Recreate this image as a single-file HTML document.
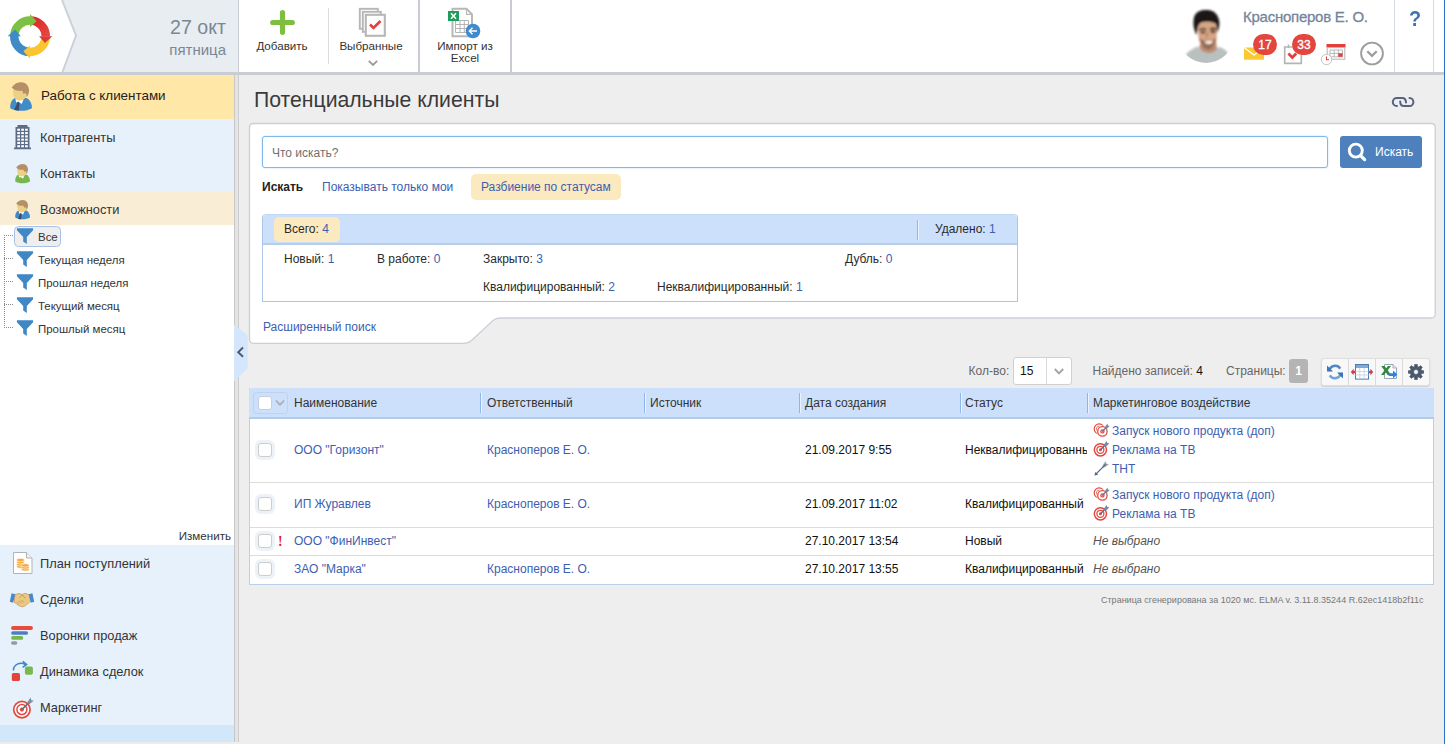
<!DOCTYPE html>
<html lang="ru">
<head>
<meta charset="utf-8">
<title>Потенциальные клиенты</title>
<style>
html,body{margin:0;padding:0;}
body{width:1445px;height:744px;overflow:hidden;position:relative;background:#eeeeee;font-family:"Liberation Sans",Arial,sans-serif;font-size:12px;color:#2a2a2a;}
.abs{position:absolute;}
a{color:#3b60b0;text-decoration:none;}
/* ---------- header ---------- */
#header{position:absolute;left:0;top:0;width:1445px;height:72px;background:#fff;border-bottom:3px solid #c9cdd3;}
#datebox{position:absolute;left:0;top:0;width:238px;height:72px;background:#e8edf1;}
#datebox .d1{position:absolute;right:12px;top:16px;font-size:19.6px;color:#7b8794;white-space:nowrap;}
#datebox .d2{position:absolute;right:12px;top:41px;font-size:15px;color:#7b8794;white-space:nowrap;}
.vsep2{position:absolute;top:0;width:2px;height:72px;background:#c9cdd3;}
.vsep1{position:absolute;width:1px;background:#d9dde2;}
.tbtn{position:absolute;top:0;height:72px;text-align:center;font-size:11.6px;color:#333;line-height:12px;white-space:nowrap;}
#uname{position:absolute;left:1243px;top:8px;line-height:18px;font-size:15px;letter-spacing:-0.25px;-webkit-text-stroke:0.3px #74859c;color:#74859c;white-space:nowrap;}
.badge{position:absolute;height:21px;width:24px;border-radius:11px;background:#e2463f;color:#fff;font-size:12px;line-height:23px;text-align:center;-webkit-text-stroke:0.3px #fff;}
/* ---------- sidebar ---------- */
#side{position:absolute;left:0;top:75px;width:234px;height:669px;background:#fff;}
.nav{position:absolute;left:0;width:234px;height:36px;background:#e7f1fc;}
.nav span{position:absolute;left:40px;top:11px;font-size:12.8px;color:#333;white-space:nowrap;line-height:16px;}
.tree{position:absolute;left:38px;font-size:11.45px;color:#333;white-space:nowrap;line-height:14px;}
#splitter{position:absolute;left:234px;top:75px;width:5px;height:667px;background:linear-gradient(90deg,#c6c6c6 0,#c9c9c9 1px,#e3e3e3 1.4px,#e5e5e5 3.6px,#cbcbcb 4px,#cdcdcd 5px);}
/* ---------- main ---------- */
#title{position:absolute;left:254px;top:86px;font-size:21.2px;color:#3a3a3a;white-space:nowrap;line-height:28px;}
.t12{position:absolute;font-size:12px;line-height:14px;white-space:nowrap;}
.pill{position:absolute;background:#fbe9c0;border-radius:5px;}
#stat{position:absolute;left:262px;top:214px;width:754px;height:86px;border:1px solid #abc6e7;border-top-color:#c2d7f3;background:#fff;border-radius:4px 4px 0 0;overflow:hidden;}
#stat .hd{position:absolute;left:0;top:0;width:754px;height:28px;background:#cce0fc;border-bottom:2px solid #b7cde8;}
/* table */
#grid{position:absolute;left:249px;top:388px;width:1183px;height:195.5px;background:#fff;border:1px solid #b9d0ea;border-top:none;}
#grid .hd{position:absolute;left:-1px;top:0;width:1185px;height:28.6px;background:#cce0fc;border-bottom:2px solid #b3cbea;border-radius:3px 3px 0 0;}
.hsep{position:absolute;top:5px;width:1px;height:20px;background:#8fb6ea;box-shadow:1px 0 0 #eaf3ff;}
.rline{position:absolute;left:0;width:1183px;height:1px;background:#dcdcdc;}
.cb{position:absolute;left:8px;width:14px;height:14px;border:1px solid #cdcdcd;border-radius:3px;background:#fff;box-shadow:0 0 0 3px #edf2f9;box-sizing:border-box;}
.cell{position:absolute;font-size:12px;line-height:14px;white-space:nowrap;color:#111;}
</style>
</head>
<body>
<!-- HEADER -->
<div id="header">
  <div id="datebox">
    <div class="d1">27 окт</div>
    <div class="d2">пятница</div>
  </div>
  <svg class="abs" style="left:0;top:0" width="90" height="72" viewBox="0 0 90 72">
    <path d="M0 0H62L76 35.5L62.5 72H0Z" fill="#fff"/>
    <path d="M62 0L76 35.5L62.5 72" fill="none" stroke="#cdd1d7" stroke-width="2"/>
    <defs><linearGradient id="lgr" x1="0" y1="0" x2="1" y2="1"><stop offset="0" stop-color="#d9262b"/><stop offset="1" stop-color="#e4473f"/></linearGradient></defs>
    <path d="M14.27 35.43A15.75 15.75 0 0 1 30.27 20.50" stroke="#7dc142" stroke-width="8.5" fill="none"/>
    <path d="M30.82 20.52A15.75 15.75 0 0 1 45.75 36.52" stroke="url(#lgr)" stroke-width="8.5" fill="none"/>
    <path d="M45.73 37.07A15.75 15.75 0 0 1 29.73 52.00" stroke="#fbc52f" stroke-width="8.5" fill="none"/>
    <path d="M29.18 51.98A15.75 15.75 0 0 1 14.25 35.98" stroke="#3f8bc8" stroke-width="8.5" fill="none"/>
    <path d="M30.00 27.10L30.00 13.90L36.65 21.31Z" fill="#7dc142"/>
    <path d="M39.15 36.25L52.35 36.25L44.94 42.90Z" fill="#dd3a36"/>
    <path d="M30.00 45.40L30.00 58.60L23.35 51.19Z" fill="#fbc52f"/>
    <path d="M20.85 36.25L7.65 36.25L15.06 29.60Z" fill="#3f8bc8"/>
  </svg>
  <div class="vsep2" style="left:238px;width:1px"></div>
  <!-- toolbar buttons -->
  <svg class="abs" style="left:269px;top:9px" width="27" height="27" viewBox="0 0 27 27"><path d="M13.5 3.7V23.3M3.7 13.5H23.3" stroke="#7fbf3f" stroke-width="5.2" stroke-linecap="round" fill="none"/></svg>
  <div class="tbtn" style="left:241px;width:82px;"><span class="abs" style="left:0;width:82px;top:40px">Добавить</span></div>
  <div class="vsep1" style="left:328px;top:8px;height:56px"></div>
  <svg class="abs" style="left:358px;top:7px" width="30" height="31" viewBox="0 0 30 31">
    <rect x="1.8" y="1.8" width="18" height="20" fill="#fff" stroke="#b7b7b7" stroke-width="1.9"/>
    <rect x="4.8" y="4.8" width="18" height="20" fill="#fff" stroke="#b7b7b7" stroke-width="1.9"/>
    <rect x="7.8" y="7.8" width="19" height="21" fill="#fff" stroke="#b7b7b7" stroke-width="2.1"/>
    <path d="M12 17.5L15.5 21L22.5 14" fill="none" stroke="#e2403a" stroke-width="2.6"/>
  </svg>
  <div class="tbtn" style="left:330px;width:82px;"><span class="abs" style="left:0;width:82px;top:40px">Выбранные</span></div>
  <svg class="abs" style="left:367px;top:59px" width="12" height="9" viewBox="0 0 12 9"><path d="M1.8 1.8L6 6L10.2 1.8" fill="none" stroke="#9a9a9a" stroke-width="1.8"/></svg>
  <div class="vsep2" style="left:418px"></div>
  <svg class="abs" style="left:446px;top:6px" width="36" height="34" viewBox="0 0 36 34">
    <path d="M6.5 2.8H20.5L26 8.3V30.2H6.5Z" fill="#fff" stroke="#b7b7b7" stroke-width="2"/>
    <path d="M20.5 2.8V8.3H26" fill="none" stroke="#b9b9b9" stroke-width="1.2"/>
    <path d="M9.5 14.5H22.5V26.5H9.5ZM9.5 18.5H22.5M9.5 22.5H22.5M14 14.5V26.5M18.3 14.5V26.5" fill="none" stroke="#b4b4b4" stroke-width="1"/>
    <rect x="2" y="5" width="11" height="10" fill="#1e9e5a"/>
    <path d="M5 7.3L10 12.7M10 7.3L5 12.7" stroke="#fff" stroke-width="1.6" fill="none"/>
    <circle cx="27" cy="25" r="7.3" fill="#3f8bd0"/>
    <path d="M31 25H23.5M26.5 21.8L23.3 25L26.5 28.2" stroke="#fff" stroke-width="1.4" fill="none"/>
  </svg>
  <div class="tbtn" style="left:422px;width:86px;"><span class="abs" style="left:0;width:86px;top:40px">Импорт из</span><span class="abs" style="left:0;width:86px;top:52px">Excel</span></div>
  <div class="vsep2" style="left:510px"></div>
  <!-- user block -->
  <svg class="abs" style="left:1176px;top:4px" width="64" height="64" viewBox="0 0 64 64">
    <defs><clipPath id="avc"><circle cx="30" cy="31" r="28"/></clipPath>
    <filter id="avb" x="-10%" y="-10%" width="120%" height="120%"><feGaussianBlur stdDeviation="0.85"/></filter></defs>
    <g clip-path="url(#avc)"><g filter="url(#avb)">
      <path d="M5 64C6 52 12 46.5 21.5 42.5C26 49.5 37 49.5 42.5 43C49 44.5 54 47 56 64Z" fill="#b9c1c0"/>
      <path d="M25 38L40 37L41 45C37 50.5 27 50.5 23 43.5Z" fill="#bd8c6f"/>
      <path d="M21.8 21C21.5 27 22 34 25 40C28 44.5 31 46 33 46C36 45.5 39 42 40.3 36C41 31 41 25 40.3 20.5C36 16 27 16 21.8 21Z" fill="#d6a585"/>
      <path d="M22.8 33C24 39.5 28 45.8 32.6 45.8C36.5 45.5 39.6 40 40.4 33C38 37 35.5 36.2 32 36.4C28 36.4 25 37 22.8 33Z" fill="#8c624e" opacity="0.85"/>
      <path d="M28.2 37.6C30.5 36.9 35 36.7 37 37.3C36 40.6 30 41 28.2 37.6Z" fill="#fbf6f2"/>
      <path d="M23.5 26.2C25.5 24.6 28.5 24.6 30 25.8M34 25.4C36 24.2 38.6 24.2 40 25.4" fill="none" stroke="#2e1c16" stroke-width="1.7"/>
      <path d="M24.8 28.4H29.2M34.8 27.8H39.2" fill="none" stroke="#241611" stroke-width="1.9"/>
      <path d="M31.5 28.5C31.2 31 30.6 32.6 30.4 33.6" fill="none" stroke="#a87358" stroke-width="1.2"/>
      <path d="M20.6 31C17.5 25 16.4 18 18.6 11.5C21 7 26.5 5.6 30 6C35 5.6 40.5 8 42.2 13.5C44.2 18 43.6 24 41 29C41 24.5 40.6 21.5 39.4 19.6C35.5 17 29 17.4 25.2 18.4C23 20 21.8 22 21.8 24.5C21.2 26.5 21 29 20.6 31Z" fill="#1d1917"/>
    </g></g>
  </svg>
  <div id="uname">Красноперов Е. О.</div>
  <svg class="abs" style="left:1243px;top:46px" width="22" height="15" viewBox="0 0 22 15"><path d="M1 1.5H21V13.7H1Z" fill="#fbc831"/><path d="M1 1.5L11 9L21 1.5" fill="none" stroke="#fff" stroke-width="1.3"/></svg>
  <div class="badge" style="left:1253px;top:34px">17</div>
  <svg class="abs" style="left:1282px;top:43px" width="22" height="22" viewBox="0 0 22 22"><path d="M2.7 4H19.3V20.3H2.7Z" fill="#fff" stroke="#b5b5b5" stroke-width="1.7"/><path d="M6.5 1.5V5M15.5 1.5V5" stroke="#b5b5b5" stroke-width="1.6"/><path d="M6.4 10.6L10.3 14.5L14.2 10.6" fill="none" stroke="#e2403a" stroke-width="2.8"/></svg>
  <div class="badge" style="left:1292px;top:34px">33</div>
  <svg class="abs" style="left:1320px;top:43px" width="27" height="23" viewBox="0 0 27 23">
    <rect x="6.5" y="1" width="19" height="3.6" fill="#e2403a"/>
    <rect x="7.2" y="4.6" width="17.6" height="11.6" fill="#fff" stroke="#b9b9b9" stroke-width="1.1"/>
    <path d="M10 7H22.5V13.8H10ZM10 10.4H22.5M14.2 7V13.8M18.3 7V13.8" fill="none" stroke="#b0b0b0" stroke-width="0.9"/>
    <rect x="18.3" y="10.4" width="4.2" height="3.4" fill="#e2403a"/>
    <circle cx="6.5" cy="16.5" r="5.2" fill="#fff" stroke="#c4c4c4" stroke-width="1"/>
    <path d="M6.5 13.5V16.8H9" fill="none" stroke="#e2403a" stroke-width="1.1"/>
  </svg>
  <svg class="abs" style="left:1359px;top:41px" width="26" height="26" viewBox="0 0 26 26"><circle cx="13" cy="12.5" r="10.9" fill="#fff" stroke="#9d9d9d" stroke-width="1.9"/><path d="M8.3 10.2L13 14.9L17.7 10.2" fill="none" stroke="#9d9d9d" stroke-width="2.3"/></svg>
  <div class="vsep1" style="left:1394px;top:0;height:72px;background:#d5dae3"></div>
  <div class="abs" style="left:1408.5px;top:6px;font-size:22.5px;font-weight:bold;color:#3f73b7;line-height:26px;transform:scaleX(0.88);transform-origin:0 0">?</div>
  <div class="vsep1" style="left:1433px;top:0;height:72px;background:#d5dae3"></div>
</div>
<!-- SIDEBAR -->
<div id="side">
  <svg width="0" height="0" style="position:absolute">
    <defs>
      <symbol id="man" viewBox="0 0 36 36">
        <path d="M6.2 30.2C5.8 25 8 21.3 10.8 19.9L22.6 19.9C25.6 21.5 28.2 25.5 27.9 30.2C23 33.6 11 33.6 6.2 30.2Z" fill="currentColor"/>
        <path d="M11.3 20.4L12.2 24.6L14.3 23.6L17.6 26L19.6 21.4Z" fill="#fff"/>
        <path d="M13.6 24L15.6 25L14.8 32.6C13.4 32.6 11.6 32.3 10.3 31.8Z" fill="var(--tie,#3b4d68)"/>
        <path d="M9.3 11.5C8.3 16 10.5 22.7 15.6 22.7C19.4 22.7 21.4 20.3 22.3 18.6C23.2 17.8 23 15.8 21.8 15.6L19 11Z" fill="#ecd083"/>
        <path d="M7.7 9.4C10 6 13.5 4.2 17.3 4.3C22.3 4.4 25.3 8.5 25 13C24.8 15.8 23.7 18.2 22.6 19.6C22.9 17.6 22.6 16.2 21.7 15.4C20.8 15 20.1 15.4 19.6 16C19 15 18.6 14 18.4 12.8C15 13.2 10.5 12.8 7.7 9.4Z" fill="#b58f68"/>
      </symbol>
      <symbol id="tgt" viewBox="0 0 17 17">
        <circle cx="7.4" cy="9.8" r="6.1" fill="#fff" stroke="#e5483f" stroke-width="1.5"/>
        <circle cx="7.4" cy="9.8" r="3.5" fill="#fff" stroke="#e5483f" stroke-width="1.3"/>
        <circle cx="7.4" cy="9.8" r="1.5" fill="#e5483f"/>
        <path d="M7.2 10L13.2 4" stroke="#55708f" stroke-width="1.3"/>
        <path d="M10.8 5L13.6 1L14.4 2.9L16.4 3.6L12.6 6.8Z" fill="#7489a2"/>
      </symbol>
      <symbol id="tgt2" viewBox="0 0 17 17">
        <circle cx="6.2" cy="6.9" r="5" fill="none" stroke="#e5483f" stroke-width="1.2"/>
        <circle cx="6.2" cy="6.9" r="2.8" fill="none" stroke="#ec6f68" stroke-width="1"/>
        <circle cx="9.4" cy="9.4" r="5.9" fill="#fff"/>
        <circle cx="9.4" cy="9.4" r="4.7" fill="#fff" stroke="#e5483f" stroke-width="1.3"/>
        <circle cx="9.4" cy="9.4" r="2.2" fill="#e5483f"/>
        <circle cx="9.4" cy="9.4" r="0.9" fill="#fff"/>
        <path d="M9.2 9.6L14 4.8" stroke="#55708f" stroke-width="1.3"/>
        <path d="M11.8 5.4L14.4 1.6L15 3.5L16.6 4.2L13.2 7Z" fill="#7489a2"/>
      </symbol>
      <symbol id="arw" viewBox="0 0 17 17">
        <path d="M2.6 14.4L12.4 4.6" stroke="#50688a" stroke-width="1.3"/>
        <path d="M1.4 15.6L2.3 11.9L5.2 14.8Z" fill="#50688a"/>
        <path d="M9.4 5.6L12.4 1L13.4 3.6L16 4.6L11.4 7.6Z" fill="#a9aeb5"/>
        <path d="M9.6 7.4L13 4" stroke="#50688a" stroke-width="1.3"/>
      </symbol>
      <symbol id="funnel" viewBox="0 0 20 20">
        <path d="M1 1.5H19V3.5L12 11V19L8 16V11L1 3.5Z" fill="#3f87c5"/>
      </symbol>
    </defs>
  </svg>
  <!-- active section -->
  <div class="nav" style="top:0;height:44px;background:#ffe8a7">
    <svg class="abs" style="left:4px;top:3px;color:#418bc8" width="36" height="36"><use href="#man"/></svg>
    <span style="left:41px;top:13px;font-size:13.4px;color:#222">Работа с клиентами</span>
  </div>
  <div class="nav" style="top:44px">
    <svg class="abs" style="left:13px;top:5px" width="19" height="26" viewBox="0 0 19 26">
      <path d="M4.5 1H14.5V3H16.5V23.5H18V25.2H1V23.5H2.5V3H4.5Z" fill="#5c6c86"/>
      <g fill="#fff"><rect x="4.3" y="4.7" width="2.7" height="2.1"/><rect x="8.2" y="4.7" width="2.7" height="2.1"/><rect x="12.1" y="4.7" width="2.7" height="2.1"/>
      <rect x="4.3" y="8" width="2.7" height="2.1"/><rect x="8.2" y="8" width="2.7" height="2.1"/><rect x="12.1" y="8" width="2.7" height="2.1"/>
      <rect x="4.3" y="11.3" width="2.7" height="2.1"/><rect x="8.2" y="11.3" width="2.7" height="2.1"/><rect x="12.1" y="11.3" width="2.7" height="2.1"/>
      <rect x="4.3" y="14.6" width="2.7" height="2.1"/><rect x="8.2" y="14.6" width="2.7" height="2.1"/><rect x="12.1" y="14.6" width="2.7" height="2.1"/>
      <rect x="4.3" y="17.9" width="2.7" height="2.1"/><rect x="8.2" y="17.9" width="2.7" height="2.1"/><rect x="12.1" y="17.9" width="2.7" height="2.1"/>
      <rect x="4.3" y="21.2" width="2.7" height="2.1"/><rect x="8.2" y="21.2" width="2.7" height="2.1"/><rect x="12.1" y="21.2" width="2.7" height="2.1"/></g>
    </svg>
    <span>Контрагенты</span>
  </div>
  <div class="nav" style="top:80px">
    <svg class="abs" style="left:10.6px;top:6px;color:#78b650;--tie:transparent" width="24.5" height="24.5"><use href="#man"/></svg>
    <span>Контакты</span>
  </div>
  <div class="nav" style="top:116px;height:34px;background:#f9edd5">
    <svg class="abs" style="left:10.6px;top:6px;color:#418bc8" width="24.5" height="24.5"><use href="#man"/></svg>
    <span>Возможности</span>
  </div>
  <!-- tree -->
  <div class="abs" style="left:4px;top:160px;width:1px;height:93px;border-left:1px dotted #8a8a8a"></div>
  <div class="abs" style="left:4px;top:160px;width:9px;height:1px;border-top:1px dotted #8a8a8a"></div>
  <div class="abs" style="left:4px;top:183px;width:9px;height:1px;border-top:1px dotted #8a8a8a"></div>
  <div class="abs" style="left:4px;top:206px;width:9px;height:1px;border-top:1px dotted #8a8a8a"></div>
  <div class="abs" style="left:4px;top:229px;width:9px;height:1px;border-top:1px dotted #8a8a8a"></div>
  <div class="abs" style="left:4px;top:252px;width:9px;height:1px;border-top:1px dotted #8a8a8a"></div>
  <div class="abs" style="left:14px;top:151px;width:47px;height:21px;border:1px solid #a9c0ec;border-radius:4.5px;background:#eeeeee;box-sizing:border-box"></div>
  <svg class="abs" style="left:16px;top:152px" width="18" height="18"><use href="#funnel"/></svg>
  <div class="tree" style="top:155px">Все</div>
  <svg class="abs" style="left:16px;top:175px" width="18" height="18"><use href="#funnel"/></svg>
  <div class="tree" style="top:178px">Текущая неделя</div>
  <svg class="abs" style="left:16px;top:198px" width="18" height="18"><use href="#funnel"/></svg>
  <div class="tree" style="top:201px">Прошлая неделя</div>
  <svg class="abs" style="left:16px;top:221px" width="18" height="18"><use href="#funnel"/></svg>
  <div class="tree" style="top:224px">Текущий месяц</div>
  <svg class="abs" style="left:16px;top:244px" width="18" height="18"><use href="#funnel"/></svg>
  <div class="tree" style="top:247px">Прошлый месяц</div>
  <div class="abs" style="right:3px;top:454px;font-size:11.6px;color:#333;line-height:14px">Изменить</div>
  <!-- bottom nav -->
  <div class="nav" style="top:470px"><svg class="abs" style="left:12px;top:6px" width="22" height="24" viewBox="0 0 22 24">
      <path d="M1.5 1.5H14.5L20 7V22.5H1.5Z" fill="#fff" stroke="#b3b3b3" stroke-width="1"/>
      <path d="M14.5 1.5V7H20" fill="#f1f1f1" stroke="#b3b3b3" stroke-width="1"/>
      <g fill="#f5a93a" stroke="#fff" stroke-width="0.6"><ellipse cx="8.5" cy="15.6" rx="3.9" ry="1.7"/><ellipse cx="8.5" cy="13.4" rx="3.9" ry="1.7"/><ellipse cx="8.5" cy="11.2" rx="3.9" ry="1.7"/><ellipse cx="8.5" cy="9" rx="3.9" ry="1.7"/>
      <ellipse cx="13.3" cy="18.4" rx="3.9" ry="1.7"/><ellipse cx="13.3" cy="16.4" rx="3.9" ry="1.7"/><ellipse cx="13.3" cy="14.4" rx="3.9" ry="1.7"/></g>
    </svg>
    <span>План поступлений</span></div>
  <div class="nav" style="top:506px"><svg class="abs" style="left:9px;top:11px" width="26" height="16" viewBox="0 0 26 16">
      <path d="M6 2.5L10 1.5L13 2.5L16 1.3L20 2.6L21.6 9.2L16.5 13.6L13.5 14.8L10.5 14L5.2 10.2Z" fill="#ecc983" stroke="#c69a5c" stroke-width="0.8"/>
      <path d="M10.5 5.8L13.4 3L16.6 6.6M8 9.5L10 11.6M10.3 8.6L12.6 11.2M12.6 8L15 10.5" fill="none" stroke="#b98a50" stroke-width="0.8"/>
      <path d="M2.6 1.2L6.2 2.2L4.2 10.8L0.8 9.8Z" fill="#4b87c6"/>
      <path d="M23.4 1.2L19.8 2.2L21.8 10.8L25.2 9.8Z" fill="#4b87c6"/>
    </svg>
    <span>Сделки</span></div>
  <div class="nav" style="top:542px"><svg class="abs" style="left:10px;top:8px" width="24" height="21" viewBox="0 0 24 21">
      <path d="M3 3H21" stroke="#e74c3c" stroke-width="3.9" stroke-linecap="round"/>
      <path d="M3 8H16.2" stroke="#4d7fc0" stroke-width="3.7" stroke-linecap="round"/>
      <path d="M3 12.9H11.4" stroke="#76b64e" stroke-width="3.7" stroke-linecap="round"/>
      <path d="M2.8 18H5.6" stroke="#9a9a9a" stroke-width="3.5" stroke-linecap="round"/>
    </svg>
    <span>Воронки продаж</span></div>
  <div class="nav" style="top:578px"><svg class="abs" style="left:10px;top:7px" width="24" height="24" viewBox="0 0 24 24">
      <rect x="1.8" y="13" width="8.2" height="8" rx="1.6" fill="#e2443d"/>
      <rect x="14.9" y="6.6" width="8" height="8.1" rx="1.8" fill="#79b851"/>
      <path d="M3.4 10.6C3.4 4.6 10 1.4 15.4 4.6" fill="none" stroke="#3f87c5" stroke-width="1.6"/>
      <path d="M12.7 1.3L16.6 4.5L12.7 7.4" fill="none" stroke="#3f87c5" stroke-width="1.6"/>
    </svg>
    <span>Динамика сделок</span></div>
  <div class="nav" style="top:614px"><svg class="abs" style="left:11px;top:5px" width="25" height="26" viewBox="0 0 25 26">
      <circle cx="10.9" cy="15.6" r="8.2" fill="#fff" stroke="#e5483f" stroke-width="1.7"/>
      <circle cx="10.9" cy="15.6" r="5" fill="#fff" stroke="#e5483f" stroke-width="1.5"/>
      <circle cx="10.9" cy="15.6" r="2.1" fill="#e5483f"/>
      <path d="M10.9 15.6L19 7.4" stroke="#5f7389" stroke-width="1.5"/>
      <path d="M16.2 8.4L19.6 3.6L20.3 6.2L22.8 6.7L18.2 10.3Z" fill="#7d8fa3"/>
    </svg>
    <span>Маркетинг</span></div>
  <div class="abs" style="left:0;top:650px;width:234px;height:17px;background:#d3e7fb"></div>
  <div class="abs" style="left:0;top:667px;width:234px;height:2px;background:#ededed"></div>
</div>
<div id="splitter"></div>
<!-- MAIN -->
<div id="title">Потенциальные клиенты</div>
<svg class="abs" style="left:1386px;top:90px" width="34" height="24" viewBox="0 0 34 24">
  <path d="M11 16.1C8.5 16.1 6.8 14.3 6.8 12C6.8 9.7 8.5 7.9 10.8 7.9H16.2C18.4 7.9 20 9.6 20 12.6" fill="none" stroke="#566380" stroke-width="2" stroke-linecap="round"/>
  <path d="M23.5 7.9C25.8 7.9 27.4 9.7 27.4 12C27.4 14.3 25.7 16.1 23.5 16.1H18C15.8 16.1 14.2 14.3 14.2 11.6" fill="none" stroke="#566380" stroke-width="2" stroke-linecap="round"/>
</svg>
<!-- search panel -->
<svg class="abs" style="left:0;top:0" width="1445" height="360" viewBox="0 0 1445 360">
  <path d="M253.5 123.5H1431.2Q1435.2 123.5 1435.2 127.5V314Q1435.2 318 1431.2 318H500Q496 318 493 320.6L471.5 340.6Q468.5 343.3 463.5 343.3H253.5Q249.5 343.3 249.5 339.3V127.5Q249.5 123.5 253.5 123.5Z" fill="#fff" stroke="#cbd0d8" stroke-width="1.3"/>
</svg>
<div class="abs" style="left:262px;top:136px;width:1066px;height:31.7px;box-sizing:border-box;border:1px solid #7db9ea;border-radius:3px;background:#fff;box-shadow:0 0 2px #b9daf5"></div>
<div class="t12" style="left:272px;top:146px;color:#707070">Что искать?</div>
<div class="abs" style="left:1340px;top:136px;width:82px;height:31.8px;background:#4e80be;border-radius:3px"></div>
<svg class="abs" style="left:1346px;top:140px" width="24" height="24" viewBox="0 0 24 24"><circle cx="9.8" cy="10.6" r="6.5" fill="none" stroke="#fff" stroke-width="2.9"/><path d="M14.6 15.6L18.6 19.6" stroke="#fff" stroke-width="3.3" stroke-linecap="round"/></svg>
<div class="t12" style="left:1375px;top:145px;color:#fff">Искать</div>
<div class="t12" style="left:262px;top:180px;font-weight:bold;color:#222">Искать</div>
<a class="t12" style="left:322px;top:180px">Показывать только мои</a>
<div class="pill" style="left:471px;top:174px;width:150px;height:26px"></div>
<a class="t12" style="left:481px;top:180px">Разбиение по статусам</a>
<!-- status box -->
<div id="stat">
  <div class="hd"></div>
  <div class="pill" style="left:11px;top:1.5px;width:65.5px;height:25.5px"></div>
  <div class="t12" style="left:21px;top:7px">Всего: <a>4</a></div>
  <div class="abs" style="left:654px;top:5px;width:1px;height:20px;background:#8fb6ea;box-shadow:1px 0 0 #eaf3ff"></div>
  <div class="t12" style="left:672px;top:7px">Удалено: <a>1</a></div>
  <div class="t12" style="left:21px;top:37px">Новый: <a>1</a></div>
  <div class="t12" style="left:114px;top:37px">В работе: <a>0</a></div>
  <div class="t12" style="left:220px;top:37px">Закрыто: <a>3</a></div>
  <div class="t12" style="left:582px;top:37px">Дубль: <a>0</a></div>
  <div class="t12" style="left:220px;top:65px">Квалифицированный: <a>2</a></div>
  <div class="t12" style="left:394px;top:65px">Неквалифицированный: <a>1</a></div>
</div>
<a class="t12" style="left:263px;top:320px">Расширенный поиск</a>
<!-- collapse handle -->
<svg class="abs" style="left:234px;top:322px" width="16" height="62" viewBox="0 0 16 62">
  <path d="M0 2.5L12 12Q13.7 13.3 13.7 15.2V44.8Q13.7 46.7 12 48L0 59.5Z" fill="#d4e6fb"/>
  <path d="M9 25.5L4.2 30.2L9 34.8" fill="none" stroke="#4a5a70" stroke-width="1.9"/>
</svg>
<!-- grid toolbar -->
<div class="t12" style="left:968.6px;top:364px;color:#666">Кол-во:</div>
<div class="abs" style="left:1013px;top:357px;width:59px;height:27.8px;box-sizing:border-box;border:1px solid #d0d0d0;border-radius:3px;background:#fff"></div>
<div class="abs" style="left:1046px;top:358px;width:1px;height:26px;background:#d8d8d8"></div>
<div class="t12" style="left:1020px;top:364px;color:#111">15</div>
<svg class="abs" style="left:1053px;top:366.5px" width="12" height="9" viewBox="0 0 12 9"><path d="M1.8 2L6 6.3L10.2 2" fill="none" stroke="#a3a3a3" stroke-width="1.9"/></svg>
<div class="t12" style="left:1092.5px;top:364px;color:#666">Найдено записей: <span style="color:#111">4</span></div>
<div class="t12" style="left:1226px;top:364px;color:#666">Страницы:</div>
<div class="abs" style="left:1289px;top:359px;width:19px;height:24px;background:#b4b4b4;border-radius:3px;color:#fff;font-weight:bold;font-size:12px;line-height:24px;text-align:center">1</div>
<div class="abs" style="left:1321px;top:358px;width:109px;height:27.6px;box-sizing:border-box;border:1px solid #dedede;border-radius:3px;background:#f8f8f8;box-shadow:0 1px 1.5px #cfcfcf"></div>
<div class="abs" style="left:1348px;top:359px;width:1px;height:26px;background:#dadada"></div>
<div class="abs" style="left:1375px;top:359px;width:1px;height:26px;background:#dadada"></div>
<div class="abs" style="left:1402px;top:359px;width:1px;height:26px;background:#dadada"></div>
<svg class="abs" style="left:1326px;top:363px" width="18" height="18" viewBox="0 0 18 18">
  <path d="M3.2 8.2A6 6 0 0 1 14.2 5.6" fill="none" stroke="#4f86c6" stroke-width="2.6"/>
  <path d="M1 2.6L1 8.6L7 8.6Z" fill="#3f74b5"/>
  <path d="M14.8 9.8A6 6 0 0 1 3.8 12.4" fill="none" stroke="#6fa3dc" stroke-width="2.6"/>
  <path d="M17 15.4L17 9.4L11 9.4Z" fill="#3f74b5"/>
</svg>
<svg class="abs" style="left:1350px;top:363px" width="24" height="18" viewBox="0 0 24 18">
  <rect x="5.5" y="1.5" width="13" height="14.6" fill="#fff" stroke="#4f7cae" stroke-width="1"/>
  <rect x="6" y="2" width="12" height="3" fill="#7fa9d8"/>
  <path d="M5.5 8.5H18.5M5.5 12H18.5M9.8 5V16M14.2 5V16" stroke="#c7d6ea" stroke-width="0.9" fill="none"/>
  <path d="M0.8 9L3.6 5.8V7.8H5V10.2H3.6V12.2Z" fill="#c9414c"/>
  <path d="M23.2 9L20.4 5.8V7.8H19V10.2H20.4V12.2Z" fill="#c9414c"/>
</svg>
<svg class="abs" style="left:1380px;top:363px" width="18" height="18" viewBox="0 0 18 18">
  <path d="M4.5 1.5H13L16.5 5V15.5H4.5Z" fill="#fff" stroke="#8d9cb3" stroke-width="0.9"/>
  <path d="M13 1.5V5H16.5" fill="#e8edf5" stroke="#8d9cb3" stroke-width="0.8"/>
  <path d="M1.2 3L4.6 3L6.2 5.2L8 3L11 3L7.8 7.2L11 12L7.6 12L6 9.6L4 12L1 12L4.4 7.4Z" fill="#2f8a3b"/>
  <path d="M8.6 10.2H13V7.6L17.4 11.6L13 15.6V13H8.6Z" fill="#2f82e0"/>
</svg>
<svg class="abs" style="left:1408px;top:364px" width="16" height="16" viewBox="0 0 16 16">
  <path fill-rule="evenodd" fill="#4a596d" stroke="#4a596d" stroke-width="0.6" stroke-linejoin="round" d="M6.50 2.40L6.70 0.21L9.30 0.21L9.50 2.40L10.90 2.98L12.59 1.57L14.43 3.41L13.02 5.10L13.60 6.50L15.79 6.70L15.79 9.30L13.60 9.50L13.02 10.90L14.43 12.59L12.59 14.43L10.90 13.02L9.50 13.60L9.30 15.79L6.70 15.79L6.50 13.60L5.10 13.02L3.41 14.43L1.57 12.59L2.98 10.90L2.40 9.50L0.21 9.30L0.21 6.70L2.40 6.50L2.98 5.10L1.57 3.41L3.41 1.57L5.10 2.98ZM8 5.6A2.4 2.4 0 1 0 8 10.4A2.4 2.4 0 1 0 8 5.6Z"/>
</svg>
<!-- GRID -->
<div id="grid">
  <div class="hd"></div>
  <div class="abs" style="left:2.5px;top:4.3px;width:35.4px;height:21.4px;box-sizing:border-box;border:1px solid #bfd2ec;border-radius:3.5px;background:#cde0fb"></div>
  <div class="abs" style="left:8px;top:8px;width:14px;height:14px;box-sizing:border-box;border:1px solid #c4cfdd;border-radius:3px;background:#fff"></div>
  <svg class="abs" style="left:24.5px;top:11px" width="10" height="8" viewBox="0 0 10 8"><path d="M0.9 1.5L5 5.8L9.1 1.5" fill="none" stroke="#a6a9ae" stroke-width="1.6"/></svg>
  <div class="cell" style="left:44px;top:8px;color:#333">Наименование</div>
  <div class="hsep" style="left:230px"></div>
  <div class="cell" style="left:237px;top:8px;color:#333">Ответственный</div>
  <div class="hsep" style="left:394px"></div>
  <div class="cell" style="left:400px;top:8px;color:#333">Источник</div>
  <div class="hsep" style="left:549px"></div>
  <div class="cell" style="left:555px;top:8px;color:#333">Дата создания</div>
  <div class="hsep" style="left:710px"></div>
  <div class="cell" style="left:715px;top:8px;color:#333">Статус</div>
  <div class="hsep" style="left:837px"></div>
  <div class="cell" style="left:843px;top:8px;color:#333">Маркетинговое воздействие</div>
  <!-- row 1 -->
  <div class="cb" style="top:55px"></div>
  <a class="cell" style="left:44px;top:55px;color:#3b60b0">ООО "Горизонт"</a>
  <a class="cell" style="left:237px;top:55px;color:#3b60b0">Красноперов Е. О.</a>
  <div class="cell" style="left:555px;top:55px">21.09.2017 9:55</div>
  <div class="cell" style="left:715px;top:55px;width:122px;overflow:hidden">Неквалифицированный</div>
  <svg class="abs" style="left:842.5px;top:34px" width="17" height="17"><use href="#tgt2"/></svg>
  <a class="cell" style="left:862px;top:36px;color:#3b60b0">Запуск нового продукта (доп)</a>
  <svg class="abs" style="left:842.5px;top:52px" width="17" height="17"><use href="#tgt"/></svg>
  <a class="cell" style="left:862px;top:55px;color:#3b60b0">Реклама на ТВ</a>
  <svg class="abs" style="left:842.5px;top:71.5px" width="17" height="17"><use href="#arw"/></svg>
  <a class="cell" style="left:862px;top:74px;color:#3b60b0">ТНТ</a>
  <div class="rline" style="top:94px"></div>
  <!-- row 2 -->
  <div class="cb" style="top:109px"></div>
  <a class="cell" style="left:44px;top:109px;color:#3b60b0">ИП Журавлев</a>
  <a class="cell" style="left:237px;top:109px;color:#3b60b0">Красноперов Е. О.</a>
  <div class="cell" style="left:555px;top:109px">21.09.2017 11:02</div>
  <div class="cell" style="left:715px;top:109px">Квалифицированный</div>
  <svg class="abs" style="left:842.5px;top:98px" width="17" height="17"><use href="#tgt2"/></svg>
  <a class="cell" style="left:862px;top:100px;color:#3b60b0">Запуск нового продукта (доп)</a>
  <svg class="abs" style="left:842.5px;top:116px" width="17" height="17"><use href="#tgt"/></svg>
  <a class="cell" style="left:862px;top:119px;color:#3b60b0">Реклама на ТВ</a>
  <div class="rline" style="top:139px"></div>
  <!-- row 3 -->
  <div class="cb" style="top:146px"></div>
  <div class="cell" style="left:28px;top:146px;color:#ee1429;font-weight:bold;font-family:'Liberation Serif',serif;font-size:13.6px;line-height:15px">!</div>
  <a class="cell" style="left:44px;top:146px;color:#3b60b0">ООО "ФинИнвест"</a>
  <div class="cell" style="left:555px;top:146px">27.10.2017 13:54</div>
  <div class="cell" style="left:715px;top:146px">Новый</div>
  <div class="cell" style="left:843px;top:146px;color:#555;font-style:italic">Не выбрано</div>
  <div class="rline" style="top:167px"></div>
  <!-- row 4 -->
  <div class="cb" style="top:174px"></div>
  <a class="cell" style="left:44px;top:174px;color:#3b60b0">ЗАО "Марка"</a>
  <a class="cell" style="left:237px;top:174px;color:#3b60b0">Красноперов Е. О.</a>
  <div class="cell" style="left:555px;top:174px">27.10.2017 13:55</div>
  <div class="cell" style="left:715px;top:174px">Квалифицированный</div>
  <div class="cell" style="left:843px;top:174px;color:#555;font-style:italic">Не выбрано</div>
</div>
<div class="abs" style="left:1101px;top:595px;font-size:9px;line-height:11px;color:#777;white-space:nowrap">Страница сгенерирована за 1020 мс. ELMA v. 3.11.8.35244 R.62ec1418b2f11c</div>
<div class="abs" style="left:1443.7px;top:0;width:1.1px;height:744px;background:#2b70c3"></div>
</body>
</html>
